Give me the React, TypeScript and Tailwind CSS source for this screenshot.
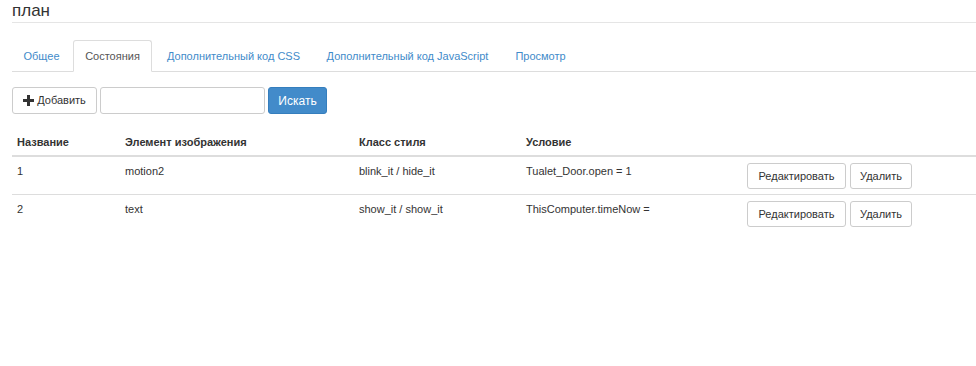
import React from "react";

const rows = [
  { name: "1", el: "motion2", cls: "blink_it / hide_it", cond: "Tualet_Door.open = 1" },
  { name: "2", el: "text", cls: "show_it / show_it", cond: "ThisComputer.timeNow =" },
];

const cols = "grid grid-cols-[108px_234px_167px_221px_1fr]";

export default function App() {
  return (
    <div className="w-[976px] h-[366px] bg-white pl-[12px] text-[#333] text-[11px] font-['Liberation_Sans',Arial,sans-serif]">
      <div className="h-[23px] border-b border-[#e5e5e5] text-[17px] leading-[20px] pt-[1px]">план</div>
      <div className="mt-[17px] flex border-b border-[#ddd] h-[32px]">
        <a className="h-[32px] w-[59px] mr-[2px] flex items-center justify-center text-[#428bca] border border-transparent">Общее</a>
        <a className="h-[32px] w-[79px] mr-[2px] flex items-center justify-center text-[#555] bg-white border border-[#ddd] border-b-white rounded-t-[3px] mb-[-1px]">Состояния</a>
        <a className="h-[32px] w-[159px] mr-[2px] flex items-center justify-center text-[#428bca] border border-transparent">Дополнительный код CSS</a>
        <a className="h-[32px] w-[185px] mr-[2px] flex items-center justify-center text-[#428bca] border border-transparent">Дополнительный код JavaScript</a>
        <a className="h-[32px] w-[77px] flex items-center justify-center text-[#428bca] border border-transparent">Просмотр</a>
      </div>
      <div className="mt-[15px] flex items-center h-[27px]">
        <button className="h-[27px] w-[85px] border border-[#ccc] rounded-[3px] bg-white text-[#333] flex items-center justify-center gap-[3px]">
          <svg width="11" height="11" viewBox="0 0 11 11"><path d="M4 0h3v4h4v3H7v4H4V7H0V4h4z" fill="#333" /></svg>
          <span>Добавить</span>
        </button>
        <input className="ml-[3px] h-[27px] w-[165px] border border-[#ccc] rounded-[3px] outline-none" />
        <button className="ml-[3px] h-[27px] w-[59px] rounded-[3px] bg-[#428bca] border border-[#357ebd] text-white text-[12px]">Искать</button>
      </div>
      <div className="mt-[13px]">
        <div className={`${cols} h-[30px] border-b-2 border-[#ddd] font-bold text-[11px]`}>
          <div className="px-[5px] pt-[7px]">Название</div>
          <div className="px-[5px] pt-[7px]">Элемент изображения</div>
          <div className="px-[5px] pt-[7px]">Класс стиля</div>
          <div className="px-[5px] pt-[7px]">Условие</div>
          <div />
        </div>
        {rows.map((r, i) => (
          <div key={i} className={`${cols} h-[38px] ${i === 0 ? "border-b border-[#ddd]" : ""}`}>
            <div className="px-[5px] pt-[6px]">{r.name}</div>
            <div className="px-[5px] pt-[6px]">{r.el}</div>
            <div className="px-[5px] pt-[6px]">{r.cls}</div>
            <div className="px-[5px] pt-[6px]">{r.cond}</div>
            <div className="px-[5px] pt-[6px] flex gap-[4px] items-start">
              <button className="h-[26px] w-[99px] border border-[#ccc] rounded-[3px] bg-white text-[#333]">Редактировать</button>
              <button className="h-[26px] w-[62px] border border-[#ccc] rounded-[3px] bg-white text-[#333]">Удалить</button>
            </div>
          </div>
        ))}
      </div>
    </div>
  );
}
